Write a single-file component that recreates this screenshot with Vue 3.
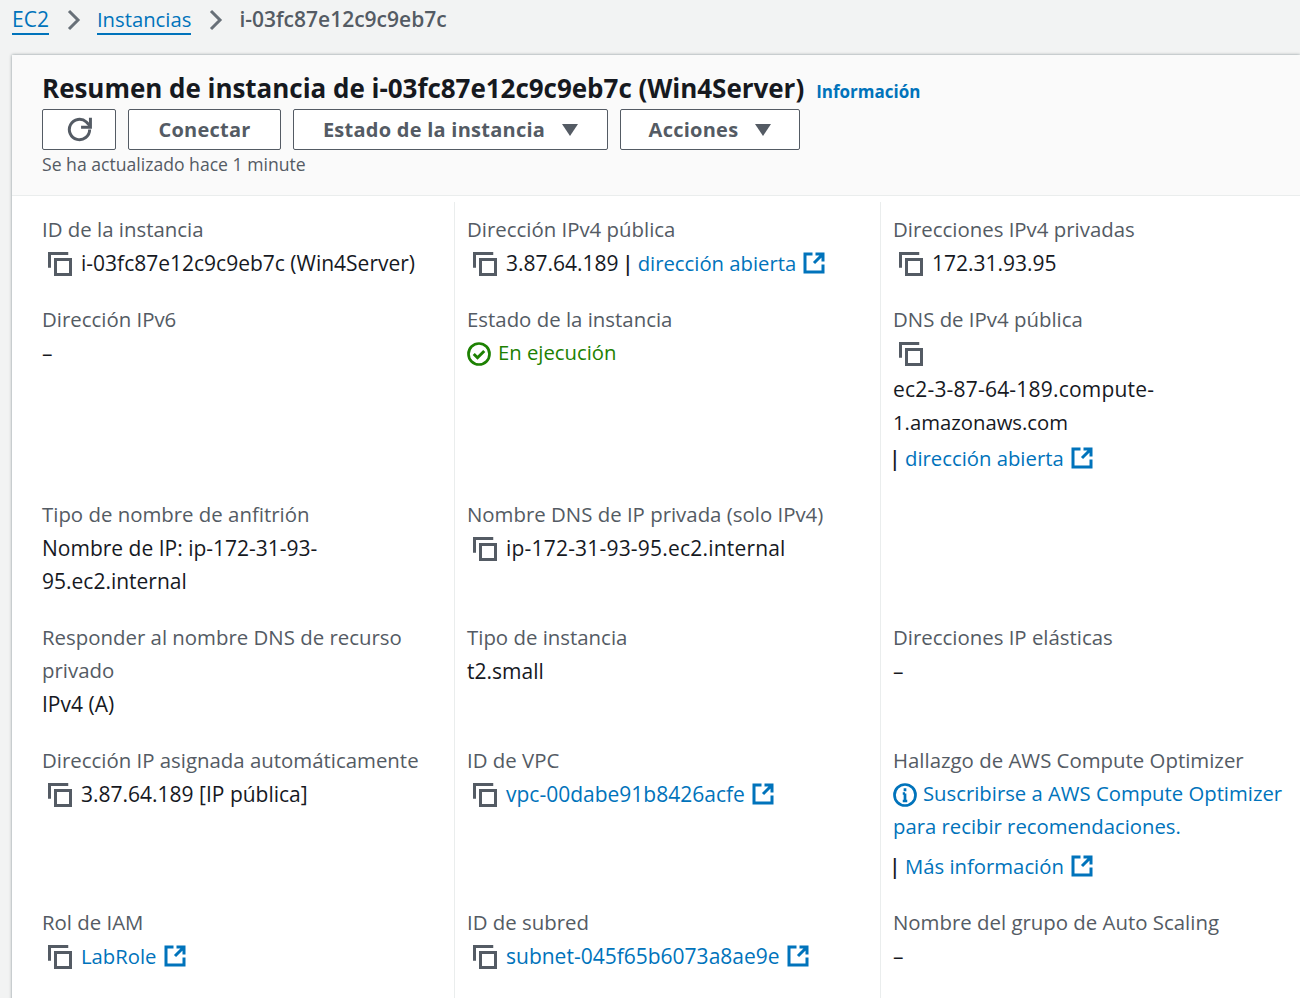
<template>
  <div class="page">
    <nav class="crumbs">
      <a class="crumb-link">EC2</a>
      <svg class="chev" viewBox="0 0 16 24"><path d="M3 3l9 9-9 9" /></svg>
      <a class="crumb-link tight">Instancias</a>
      <svg class="chev" viewBox="0 0 16 24"><path d="M3 3l9 9-9 9" /></svg>
      <span class="crumb-current">i-03fc87e12c9c9eb7c</span>
    </nav>

    <section class="panel">
      <header class="panel-head">
        <div class="title-row">
          <h1>Resumen de instancia de i-03fc87e12c9c9eb7c (Win4Server)</h1>
          <a class="info-link">Información</a>
        </div>
        <div class="actions">
          <button class="btn btn-icon" aria-label="Actualizar">
            <svg viewBox="0 0 16 16" class="refresh">
              <path d="M14.500 8a6.500 6.500 0 1 1-2.100-4.800L14.500 5.500" />
              <path d="M15 0.500v6h-6" />
            </svg>
          </button>
          <button class="btn btn-connect">Conectar</button>
          <button class="btn btn-state">Estado de la instancia<i class="caret"></i></button>
          <button class="btn btn-actions">Acciones<i class="caret"></i></button>
        </div>
        <p class="updated">Se ha actualizado hace 1 minute</p>
      </header>

      <div class="details">
        <div class="cell">
          <div class="label">ID de la instancia</div>
          <div class="value"><svg class="copy" viewBox="0 0 16 16"><path d="M1 10.500V1h12.500" /><rect x="5" y="5" width="10" height="10" /></svg>i-03fc87e12c9c9eb7c (Win4Server)</div>
        </div>
        <div class="cell">
          <div class="label">Dirección IPv4 pública</div>
          <div class="value"><svg class="copy" viewBox="0 0 16 16"><path d="M1 10.500V1h12.500" /><rect x="5" y="5" width="10" height="10" /></svg>3.87.64.189 <span class="pipe">|</span><a class="link tight">dirección abierta</a><svg class="ext" viewBox="0 0 16 16"><path d="M7 2H2v12h12V9" /><path d="M9 2h5v5M14 2L8 8" /></svg></div>
        </div>
        <div class="cell last">
          <div class="label">Direcciones IPv4 privadas</div>
          <div class="value"><svg class="copy" viewBox="0 0 16 16"><path d="M1 10.500V1h12.500" /><rect x="5" y="5" width="10" height="10" /></svg>172.31.93.95</div>
        </div>

        <div class="cell">
          <div class="label">Dirección IPv6</div>
          <div class="value plain">–</div>
        </div>
        <div class="cell">
          <div class="label">Estado de la instancia</div>
          <div class="value plain running">
            <svg class="status" viewBox="0 0 16 16"><circle cx="8" cy="8" r="7" /><path d="M4.500 8l2.500 2.500L11.500 6" /></svg><span class="tight">En ejecución</span>
          </div>
        </div>
        <div class="cell last">
          <div class="label">DNS de IPv4 pública</div>
          <div class="value icon-line"><svg class="copy" viewBox="0 0 16 16"><path d="M1 10.500V1h12.500" /><rect x="5" y="5" width="10" height="10" /></svg></div>
          <div class="value plain dns"><span class="wide">ec2-3-87-64-189.compute-</span><span class="tight">1.amazonaws.com</span></div>
          <div class="value plain sep"><span class="pipe first">|</span> <a class="link tight">dirección abierta</a><svg class="ext" viewBox="0 0 16 16"><path d="M7 2H2v12h12V9" /><path d="M9 2h5v5M14 2L8 8" /></svg></div>
        </div>

        <div class="cell">
          <div class="label">Tipo de nombre de anfitrión</div>
          <div class="value plain narrow">Nombre de IP: ip-172-31-93-95.ec2.internal</div>
        </div>
        <div class="cell">
          <div class="label">Nombre DNS de IP privada (solo IPv4)</div>
          <div class="value"><svg class="copy" viewBox="0 0 16 16"><path d="M1 10.500V1h12.500" /><rect x="5" y="5" width="10" height="10" /></svg><span class="wide">ip-172-31-93-95.ec2.internal</span></div>
        </div>
        <div class="cell last"></div>

        <div class="cell">
          <div class="label">Responder al nombre DNS de recurso privado</div>
          <div class="value plain">IPv4 (A)</div>
        </div>
        <div class="cell">
          <div class="label">Tipo de instancia</div>
          <div class="value plain">t2.small</div>
        </div>
        <div class="cell last">
          <div class="label">Direcciones IP elásticas</div>
          <div class="value plain">–</div>
        </div>

        <div class="cell">
          <div class="label">Dirección IP asignada automáticamente</div>
          <div class="value"><svg class="copy" viewBox="0 0 16 16"><path d="M1 10.500V1h12.500" /><rect x="5" y="5" width="10" height="10" /></svg>3.87.64.189 [IP pública]</div>
        </div>
        <div class="cell">
          <div class="label">ID de VPC</div>
          <div class="value"><svg class="copy" viewBox="0 0 16 16"><path d="M1 10.500V1h12.500" /><rect x="5" y="5" width="10" height="10" /></svg><a class="link">vpc-00dabe91b8426acfe</a><svg class="ext" viewBox="0 0 16 16"><path d="M7 2H2v12h12V9" /><path d="M9 2h5v5M14 2L8 8" /></svg></div>
        </div>
        <div class="cell last">
          <div class="label">Hallazgo de AWS Compute Optimizer</div>
          <div class="value plain optimizer">
            <a class="link tight"><svg class="info-icon" viewBox="0 0 16 16"><circle cx="8" cy="8" r="7" /><path d="M8 7v5M6.500 12h3M6.500 7H8" /><path d="M8 3.500v2" /></svg>Suscribirse a AWS Compute Optimizer para recibir recomendaciones.</a>
          </div>
          <div class="value plain more"><span class="pipe first">|</span> <a class="link tight">Más información</a><svg class="ext" viewBox="0 0 16 16"><path d="M7 2H2v12h12V9" /><path d="M9 2h5v5M14 2L8 8" /></svg></div>
        </div>

        <div class="cell bottom">
          <div class="label">Rol de IAM</div>
          <div class="value"><svg class="copy" viewBox="0 0 16 16"><path d="M1 10.500V1h12.500" /><rect x="5" y="5" width="10" height="10" /></svg><a class="link tight">LabRole</a><svg class="ext" viewBox="0 0 16 16"><path d="M7 2H2v12h12V9" /><path d="M9 2h5v5M14 2L8 8" /></svg></div>
        </div>
        <div class="cell bottom">
          <div class="label">ID de subred</div>
          <div class="value"><svg class="copy" viewBox="0 0 16 16"><path d="M1 10.500V1h12.500" /><rect x="5" y="5" width="10" height="10" /></svg><a class="link">subnet-045f65b6073a8ae9e</a><svg class="ext" viewBox="0 0 16 16"><path d="M7 2H2v12h12V9" /><path d="M9 2h5v5M14 2L8 8" /></svg></div>
        </div>
        <div class="cell last bottom">
          <div class="label">Nombre del grupo de Auto Scaling</div>
          <div class="value plain">–</div>
        </div>
      </div>
    </section>
  </div>
</template>

<script setup>
</script>

<style>
html,
body {
  margin: 0;
  overflow: hidden;
}
</style>

<style scoped>
.page {
  height: 998px;
  overflow: hidden;
  background: #f2f3f3;
  font-family: "Open Sans", "Noto Sans", sans-serif;
  font-size: 21px;
  line-height: 33px;
  color: #16191f;
}
.tight {
  font-size: 20.3px;
}
.wide {
  letter-spacing: 0.2px;
}
.crumbs {
  display: flex;
  align-items: center;
  height: 55px;
  padding: 0 0 17px 12px;
  box-sizing: border-box;
}
.crumb-link {
  color: #0073bb;
  line-height: 27px;
  border-bottom: 2px solid #0073bb;
  margin-top: 3px;
}
.crumb-current {
  color: #545b64;
  font-weight: 600;
}
.chev {
  width: 16px;
  height: 24px;
  margin: 2px 15px 0 17px;
}
.chev path {
  fill: none;
  stroke: #687078;
  stroke-width: 3;
}
.panel {
  margin-left: 12px;
  background: #fff;
  box-shadow: 0 0 3px rgba(0, 28, 36, 0.45);
}
.panel-head {
  height: 141px;
  box-sizing: border-box;
  padding: 15px 30px 0;
  background: #fafafa;
  border-bottom: 1px solid #eaeded;
}
.title-row {
  display: flex;
  align-items: baseline;
  height: 39px;
}
h1 {
  margin: 0;
  font-size: 26px;
  line-height: 36px;
  font-weight: 700;
  letter-spacing: -0.03px;
  color: #16191f;
}
.info-link {
  margin-left: 12px;
  font-size: 17px;
  font-weight: 700;
  color: #0073bb;
}
.actions {
  display: flex;
  gap: 12px;
}
.btn {
  display: flex;
  align-items: center;
  justify-content: center;
  height: 41px;
  padding: 0 0 1px;
  box-sizing: border-box;
  background: #fff;
  border: 1px solid #545b64;
  border-radius: 2px;
  font-family: inherit;
  font-size: 20px;
  font-weight: 700;
  letter-spacing: 0.25px;
  color: #545b64;
}
.btn-icon {
  width: 74px;
}
.btn-connect {
  width: 153px;
}
.btn-state {
  width: 315px;
}
.btn-actions {
  width: 180px;
}
.refresh {
  width: 25px;
  height: 25px;
}
.refresh path {
  fill: none;
  stroke: #545b64;
  stroke-width: 1.900;
}
.caret {
  width: 0;
  height: 0;
  margin-left: 17px;
  margin-top: 1px;
  border-left: 8px solid transparent;
  border-right: 8px solid transparent;
  border-top: 12px solid #545b64;
}
.updated {
  margin: 0;
  font-size: 17.6px;
  line-height: 30px;
  margin-top: -1px;
  margin-bottom: 1px;
  color: #545b64;
}
.details {
  display: grid;
  grid-template-columns: 443px 426px 1fr;
  margin-top: 6px;
}
.cell {
  padding: 11.5px 12px 12.5px 12px;
  border-right: 1px solid #eaeded;
}
.cell.bottom {
  padding-bottom: 40px;
}
.cell:nth-child(3n + 1) {
  padding-left: 30px;
}
.cell.last {
  border-right: none;
  padding-right: 4px;
}
.label {
  color: #545b64;
  font-size: 20.4px;
  margin-top: -1px;
  margin-bottom: 1px;
}
.value {
  display: flex;
  align-items: center;
  white-space: pre-wrap;
}
.value.plain {
  display: block;
}
.copy {
  flex: none;
  width: 24px;
  height: 24px;
  margin: 2px 9px 0 6px;
}
.copy path,
.copy rect {
  fill: none;
  stroke: #545b64;
  stroke-width: 2;
}
.pipe {
  margin: 0 4px 0 -2px;
  font-weight: 600;
}
.pipe.first {
  margin: 0 -1px 0 -4px;
}
.link {
  color: #0073bb;
}
.ext {
  flex: none;
  width: 24px;
  height: 24px;
  margin-left: 6px;
  vertical-align: -4px;
}
.ext path {
  fill: none;
  stroke: #0073bb;
  stroke-width: 2;
}
.running {
  color: #1d8102;
  margin-top: -1px;
  margin-bottom: 1px;
}
.status {
  width: 24px;
  height: 24px;
  margin-right: 7px;
  vertical-align: -6px;
}
.status circle,
.status path {
  fill: none;
  stroke: #1d8102;
  stroke-width: 1.800;
}
.status path {
  stroke-width: 2;
}
.icon-line {
  height: 36px;
  align-items: flex-start;
}
.icon-line .copy {
  margin-top: 5px;
}
.sep {
  margin-top: 3px;
}
.narrow {
  max-width: 300px;
}
.optimizer {
  margin-top: -1px;
  margin-bottom: 1px;
}
.info-icon {
  width: 24px;
  height: 24px;
  margin-right: 6px;
  vertical-align: -6px;
}
.info-icon circle,
.info-icon path {
  fill: none;
  stroke: #0073bb;
  stroke-width: 1.800;
}
.more {
  margin-top: 7px;
}
</style>
